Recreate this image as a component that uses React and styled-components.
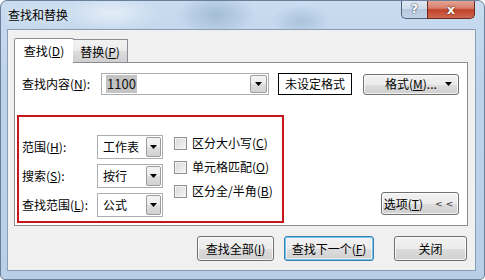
import React from "react";
import styled, { createGlobalStyle, css } from "styled-components";

const GlobalStyle = createGlobalStyle`
  html, body {
    margin: 0;
    padding: 0;
    background: #ffffff;
  }
  body {
    font-family: "Noto Sans CJK SC", "Noto Sans", sans-serif;
    font-size: 12px;
    color: #000;
  }
  * {
    box-sizing: border-box;
  }
`;

const Window = styled.div`
  width: 485px;
  height: 280px;
  display: flex;
  flex-direction: column;
  padding: 0 8px 8px 6px;
  border: 1px solid #6a7f99;
  border-radius: 7px 7px 5px 5px;
  background:
    radial-gradient(ellipse 40px 22px at 215px 14px, rgba(120, 150, 185, 0.45), transparent),
    radial-gradient(ellipse 30px 16px at 300px 20px, rgba(120, 150, 185, 0.35), transparent),
    radial-gradient(ellipse 50px 18px at 110px 12px, rgba(255, 255, 255, 0.5), transparent),
    linear-gradient(180deg, #c9dcf0 0%, #bdd3ea 30%, #b9cfe7 100%);
  overflow: hidden;
`;

const TitleBar = styled.div`
  height: 28px;
  flex: none;
  display: flex;
  align-items: flex-start;
`;

const Title = styled.div`
  padding: 7px 0 0 1px;
  line-height: 14px;
  font-size: 12px;
  color: #000;
  text-shadow: 0 0 6px rgba(255, 255, 255, 0.9);
`;

const CaptionButtons = styled.div`
  margin-left: auto;
  margin-right: 1px;
  margin-top: -1px;
  display: flex;
  height: 19px;
`;

const CaptionButton = styled.div`
  height: 19px;
  display: flex;
  align-items: center;
  justify-content: center;
  font-family: "DejaVu Sans", sans-serif;
  font-weight: bold;
  color: #fff;
  border: 1px solid #4e627c;
  border-top: none;
`;

const HelpButton = styled(CaptionButton)`
  width: 26px;
  font-size: 12px;
  border-right: none;
  border-radius: 0 0 0 5px;
  background: linear-gradient(180deg, #e1e9f3 0%, #cfdbea 48%, #b5c7dd 52%, #c3d3e6 100%);
  text-shadow: 0 0 2px #3c4c60, 0 0 1px #3c4c60;
`;

const CloseButton = styled(CaptionButton)`
  width: 48px;
  font-size: 13px;
  border-color: #6b2a20;
  border-radius: 0 0 5px 0;
  background: linear-gradient(180deg, #e7a697 0%, #d7806c 45%, #c2412a 55%, #cf6a52 100%);
  text-shadow: 0 0 2px #5a1a10, 0 0 1px #5a1a10;
`;

const Client = styled.div`
  flex: 1;
  display: flex;
  flex-direction: column;
  background: #f0f0f0;
  border: 1px solid #8a9db4;
  padding: 8px 7px 0 6px;
`;

const TabStrip = styled.div`
  display: flex;
  align-items: flex-end;
  height: 25px;
  margin-bottom: -1px;
  position: relative;
  z-index: 1;
`;

const Tab = styled.div`
  display: flex;
  align-items: center;
  justify-content: center;
  border: 1px solid #898c95;
  line-height: 14px;
  ${(p) =>
    p.$active
      ? css`
          width: 60px;
          height: 25px;
          padding-bottom: 1px;
          background: #ffffff;
          border-bottom: none;
          border-radius: 2px 2px 0 0;
        `
      : css`
          width: 55px;
          height: 23px;
          margin-left: -1px;
          margin-bottom: 1px;
          padding-top: 1px;
          background: linear-gradient(180deg, #f2f2f2 0%, #ebebeb 50%, #dddddd 51%, #cfcfcf 100%);
          border-left: none;
          border-bottom: none;
        `}
`;

const TabPanel = styled.div`
  background: #ffffff;
  border: 1px solid #898c95;
  padding: 10px 0 2px 2px;
  display: flex;
  flex-direction: column;
`;

const FindRow = styled.div`
  display: flex;
  align-items: center;
  height: 22px;
  padding-left: 5px;
`;

const Label = styled.div`
  width: ${(p) => p.$w}px;
  flex: none;
  line-height: 14px;
  white-space: nowrap;
`;

const Combo = styled.div`
  width: ${(p) => p.$w}px;
  height: ${(p) => p.$h}px;
  flex: none;
  display: flex;
  padding: 1px;
  background: #ffffff;
  border: 1px solid #abadb3;
`;

const ComboValue = styled.div`
  flex: 1;
  display: flex;
  align-items: center;
  padding-left: ${(p) => p.$pad ?? 4}px;
  line-height: 14px;
`;

const Selected = styled.span`
  background: #c3c3c3;
  color: #111;
  padding: 2px 1px;
  font-size: 13px;
`;

const DropButton = styled.div`
  width: ${(p) => p.$w}px;
  flex: none;
  display: flex;
  align-items: center;
  justify-content: center;
  border: 1px solid #9c9c9c;
  border-radius: 2px;
  background: linear-gradient(180deg, #f4f4f4 0%, #ececec 50%, #dedede 51%, #d2d2d2 100%);
`;

const Arrow = () => (
  <svg width="7" height="4" viewBox="0 0 7 4">
    <polygon points="0,0 7,0 3.5,4" fill="#000" />
  </svg>
);

const FormatPreview = styled.div`
  width: 74px;
  height: 22px;
  margin-left: 9px;
  border: 1px solid #000;
  background: #fff;
  display: flex;
  align-items: center;
  justify-content: center;
  line-height: 14px;
`;

const Button = styled.div`
  width: ${(p) => p.$w}px;
  height: ${(p) => p.$h}px;
  flex: none;
  display: flex;
  align-items: center;
  justify-content: center;
  line-height: 14px;
  border: 1px solid #707070;
  border-radius: 3px;
  background: linear-gradient(180deg, #f2f2f2 0%, #ebebeb 50%, #dddddd 51%, #cfcfcf 100%);
  box-shadow: inset 0 0 0 1px rgba(255, 255, 255, 0.75);
  ${(p) =>
    p.$default &&
    css`
      border-color: #3c7fb1;
      box-shadow: inset 0 0 0 1px #6ec4ea, inset 0 0 0 2px rgba(255, 255, 255, 0.6);
    `}
`;

const MenuButton = styled(Button)`
  margin-left: 11px;
  justify-content: flex-start;
  padding: 0 6px 0 21px;
`;

const MenuText = styled.span`
  flex: 1;
`;

const Chevrons = styled.span`
  margin-left: 12px;
  font-family: "DejaVu Sans", sans-serif;
  font-size: 9px;
  letter-spacing: 3px;
  color: #333;
`;

const OptionsArea = styled.div`
  display: flex;
  align-items: flex-end;
  justify-content: space-between;
  margin-top: 20px;
`;

const OptionsGroup = styled.div`
  width: 267px;
  height: 108px;
  border: 2px solid #c8141c;
  display: flex;
  padding: 0 0 0 3px;
`;

const FieldGrid = styled.div`
  display: grid;
  grid-template-columns: 75px 66px;
  grid-auto-rows: 24px;
  row-gap: 5px;
  align-items: center;
  padding-top: 18px;
`;

const CheckList = styled.div`
  display: flex;
  flex-direction: column;
  padding: 14px 0 0 11px;
`;

const CheckRow = styled.div`
  display: flex;
  align-items: center;
  height: 24px;
  line-height: 14px;
  white-space: nowrap;
`;

const CheckBox = styled.span`
  width: 13px;
  height: 13px;
  margin-right: 5px;
  border: 1px solid #8e8f8f;
  background: linear-gradient(135deg, #d8d8d8 0%, #eaeaea 60%, #f8f8f8 100%);
  box-shadow: inset 0 0 0 1px #f4f4f4;
`;

const OptionsButton = styled(Button)`
  margin: 0 8px 8px 0;
`;

const ActionBar = styled.div`
  display: flex;
  justify-content: flex-end;
  gap: 10px;
  margin-top: 10px;
  padding-right: 1px;
`;

const CloseAction = styled(Button)`
  margin-left: 10px;
`;

function Select({ value, width, height, drop, pad, children }) {
  return (
    <Combo $w={width} $h={height}>
      <ComboValue $pad={pad}>{children ?? value}</ComboValue>
      <DropButton $w={drop}>
        <Arrow />
      </DropButton>
    </Combo>
  );
}

const fields = [
  { label: "范围", key: "H", value: "工作表" },
  { label: "搜索", key: "S", value: "按行" },
  { label: "查找范围", key: "L", value: "公式" },
];

const checks = [
  { label: "区分大小写", key: "C" },
  { label: "单元格匹配", key: "O" },
  { label: "区分全/半角", key: "B" },
];

export default function App() {
  return (
    <>
      <GlobalStyle />
      <Window>
        <TitleBar>
          <Title>查找和替换</Title>
          <CaptionButtons>
            <HelpButton>?</HelpButton>
            <CloseButton>x</CloseButton>
          </CaptionButtons>
        </TitleBar>
        <Client>
          <TabStrip>
            <Tab $active>
              查找(<u>D</u>)
            </Tab>
            <Tab>
              替换(<u>P</u>)
            </Tab>
          </TabStrip>
          <TabPanel>
            <FindRow>
              <Label $w={79}>
                查找内容(<u>N</u>):
              </Label>
              <Select width={168} height={22} drop={17} pad={3}>
                <Selected>1100</Selected>
              </Select>
              <FormatPreview>未设定格式</FormatPreview>
              <MenuButton $w={96} $h={21}>
                <MenuText>
                  格式(<u>M</u>)...
                </MenuText>
                <Arrow />
              </MenuButton>
            </FindRow>
            <OptionsArea>
              <OptionsGroup>
                <FieldGrid>
                  {fields.map((f) => (
                    <React.Fragment key={f.key}>
                      <Label>
                        {f.label}(<u>{f.key}</u>):
                      </Label>
                      <Select value={f.value} width={66} height={24} drop={15} />
                    </React.Fragment>
                  ))}
                </FieldGrid>
                <CheckList>
                  {checks.map((c) => (
                    <CheckRow key={c.key}>
                      <CheckBox />
                      {c.label}(<u>{c.key}</u>)
                    </CheckRow>
                  ))}
                </CheckList>
              </OptionsGroup>
              <OptionsButton $w={78} $h={23}>
                选项(<u>T</u>)<Chevrons>&lt;&lt;</Chevrons>
              </OptionsButton>
            </OptionsArea>
          </TabPanel>
          <ActionBar>
            <Button $w={77} $h={25}>
              查找全部(<u>I</u>)
            </Button>
            <Button $w={90} $h={25} $default>
              查找下一个(<u>F</u>)
            </Button>
            <CloseAction $w={73} $h={25}>
              关闭
            </CloseAction>
          </ActionBar>
        </Client>
      </Window>
    </>
  );
}
